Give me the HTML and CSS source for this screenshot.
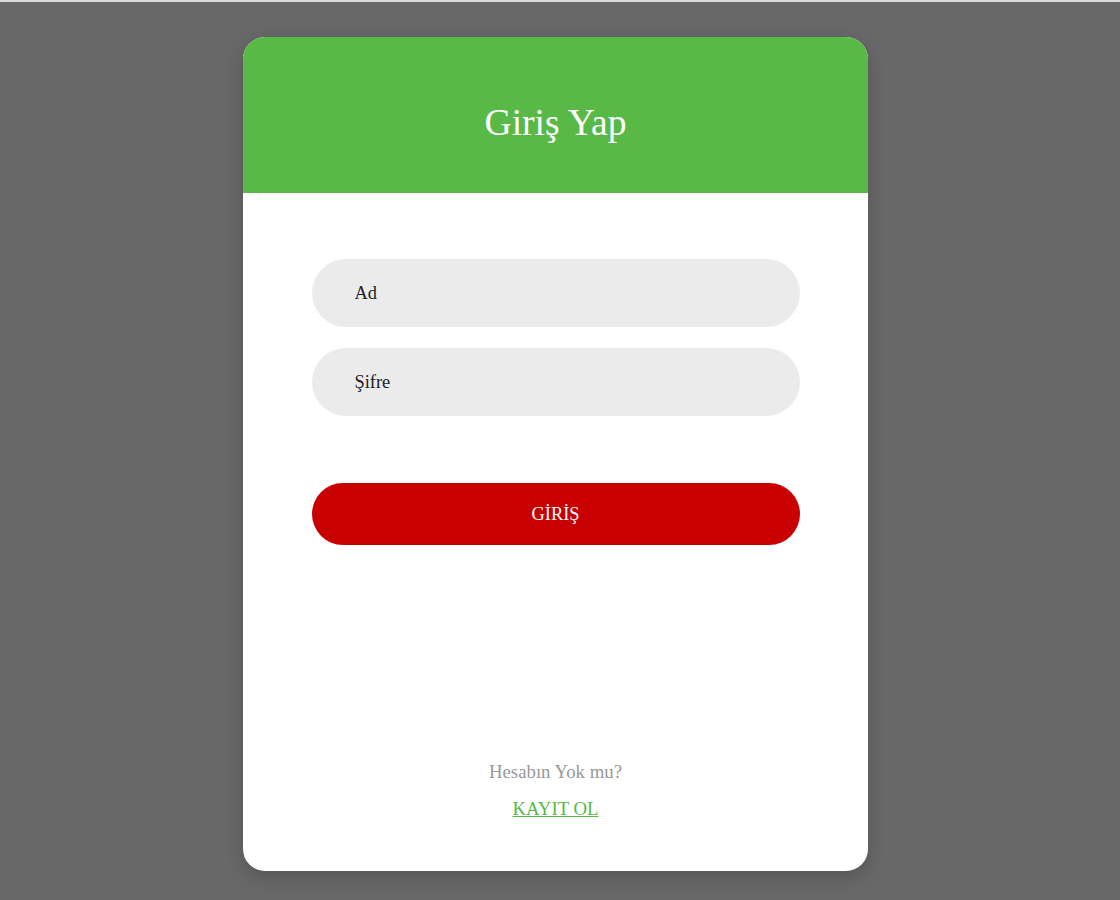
FILE: index.html
```html
<!DOCTYPE html>
<html lang="tr">
<head>
<meta charset="utf-8">
<title>Giriş Yap</title>
<link rel="stylesheet" href="styles.css">
</head>
<body>
<div class="topline"></div>
<main class="page">
  <section class="card">
    <header class="card-head">
      <h1 class="title">Giriş Yap</h1>
    </header>
    <div class="card-body">
      <form class="form">
        <input class="field" type="text" placeholder="Ad">
        <input class="field" type="password" placeholder="Şifre">
        <button class="submit" type="button">GİRİŞ</button>
      </form>
      <footer class="foot">
        <p class="foot-text">Hesabın Yok mu?</p>
        <a class="foot-link" href="#">KAYIT OL</a>
      </footer>
    </div>
  </section>
</main>
</body>
</html>
```
FILE: styles.css
```css
* { box-sizing: border-box; }
html, body { margin: 0; padding: 0; }
body {
  background: #686868;
  font-family: "Liberation Serif", "Times New Roman", serif;
  height: 900px;
  overflow: hidden;
}
.topline {
  height: 2px;
  background: #dcdcdc;
}
.page {
  display: flex;
  justify-content: flex-start;
  padding-top: 35px;
  padding-left: 243px;
}
.card {
  width: 625px;
  height: 834px;
  background: #fff;
  border-radius: 22px;
  overflow: hidden;
  display: flex;
  flex-direction: column;
  box-shadow: 0 6px 18px rgba(0,0,0,0.18);
}
.card-head {
  height: 156px;
  background: #58b947;
  display: flex;
  align-items: center;
  justify-content: center;
}
.title {
  margin: 0;
  color: #fff;
  font-weight: normal;
  font-size: 37.6px;
  line-height: 1;
  padding-top: 16px;
}
.card-body {
  flex: 1;
  display: flex;
  flex-direction: column;
  align-items: center;
  padding-top: 66px;
  padding-bottom: 52px;
}
.form {
  width: 488px;
  display: flex;
  flex-direction: column;
  gap: 21px;
}
.field {
  height: 68px;
  border: none;
  outline: none;
  border-radius: 34px;
  background: #ebebeb;
  padding: 0 0 0 43px;
  font-family: "Liberation Serif", "Times New Roman", serif;
  font-size: 18.4px;
  color: #222;
}
.field::placeholder { color: #222; opacity: 1; }
.submit {
  margin-top: 46px;
  height: 62px;
  border: none;
  border-radius: 31px;
  background: #c80000;
  color: #fff;
  font-family: "Liberation Serif", "Times New Roman", serif;
  font-size: 18.4px;
  cursor: pointer;
}
.foot {
  margin-top: auto;
  display: flex;
  flex-direction: column;
  align-items: center;
  gap: 16px;
}
.foot-text {
  margin: 0;
  color: #999;
  font-size: 18.8px;
  line-height: 21px;
}
.foot-link {
  color: #58b947;
  font-size: 18.8px;
  line-height: 21px;
  text-decoration: underline;
}
```
